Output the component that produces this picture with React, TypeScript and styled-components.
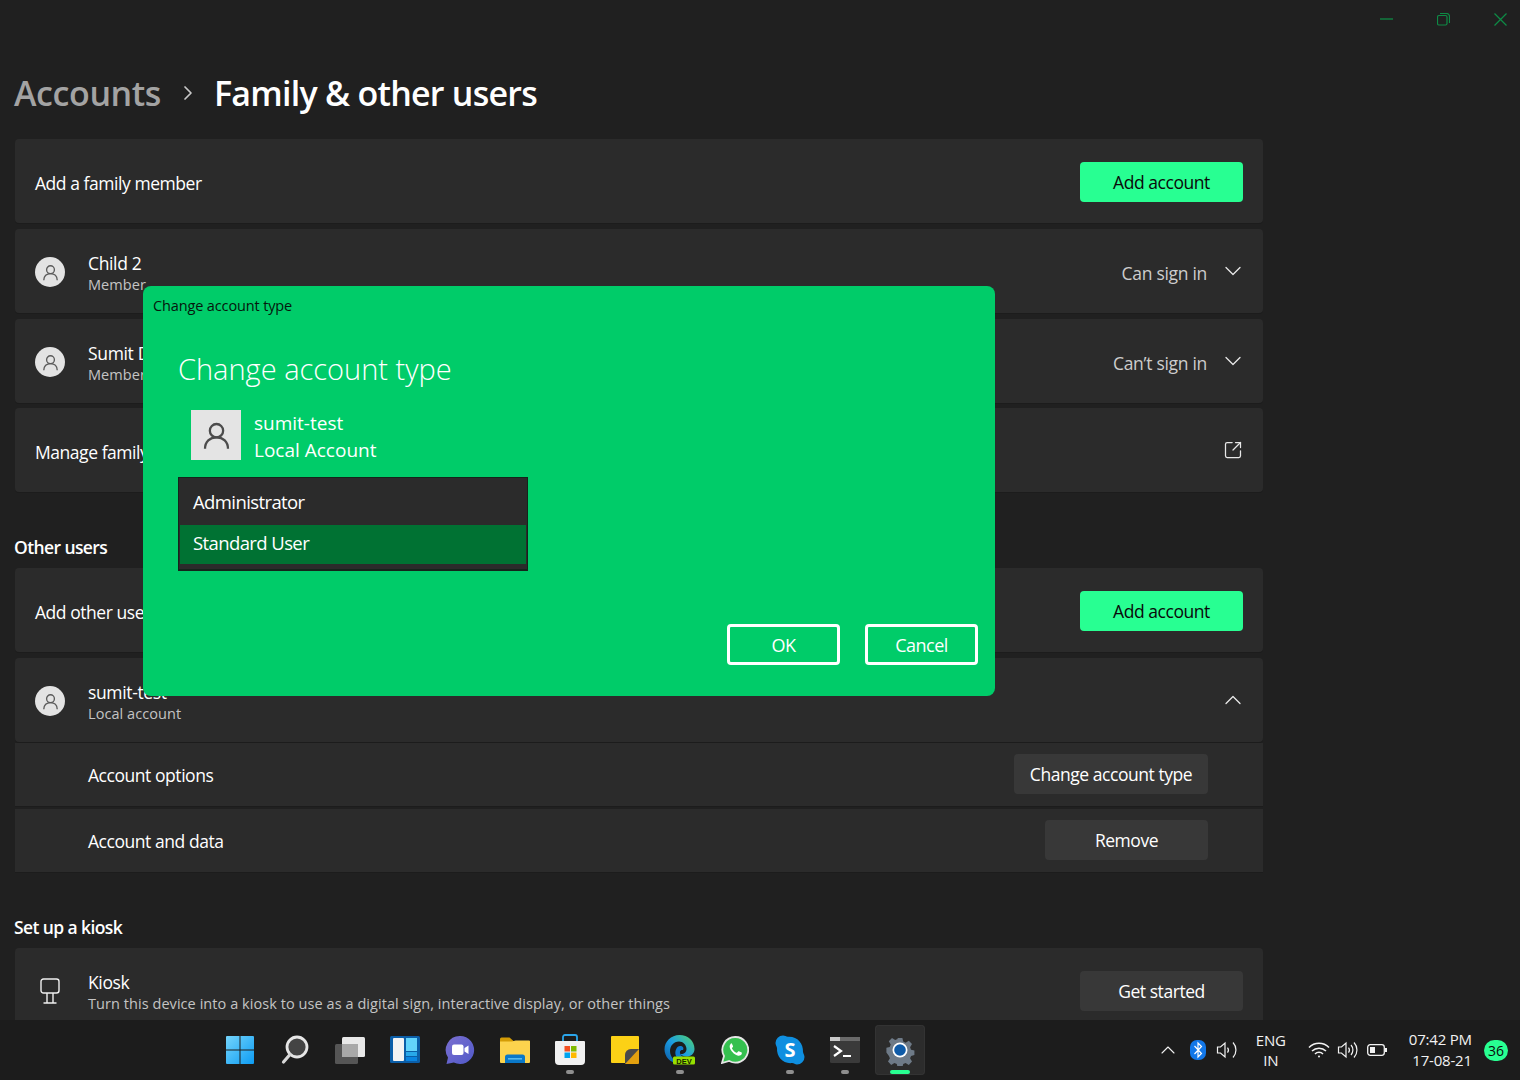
import { createGlobalStyle, styled } from "styled-components";
import type { ReactNode } from "react";
import { ChevronDown, ChevronRight, ChevronUp, SquareArrowOutUpRight } from "lucide-react";

const GlobalStyle = createGlobalStyle`
  html, body {
    margin: 0;
    padding: 0;
    background: #202020;
    overflow: hidden;
  }
  * {
    box-sizing: border-box;
  }
  body {
    font-family: "Open Sans", "Noto Sans", "Liberation Sans", sans-serif;
    color: #fff;
  }
`;

const Screen = styled.div`
  position: relative;
  width: 1520px;
  height: 1080px;
  overflow: hidden;
  background: #202020;
  display: flex;
  flex-direction: column;
`;

const Content = styled.main`
  height: 1020px;
  flex-shrink: 0;
  overflow: hidden;
  padding: 0 257px 0 15px;
`;

const WindowControls = styled.div`
  height: 38px;
  margin-right: -257px;
  display: flex;
  justify-content: flex-end;
  align-items: center;
  color: #0e8a45;
`;

const WindowButton = styled.span`
  width: 57px;
  display: flex;
  justify-content: center;
  &:last-child {
    width: 40px;
    margin-left: 8px;
  }
`;

const Breadcrumb = styled.h1`
  margin: 27px 0 0 -1px;
  height: 74px;
  display: flex;
  align-items: flex-start;
  font-size: 34px;
  line-height: 56px;
  font-weight: 600;
  letter-spacing: -0.75px;
  color: #fff;
`;

const Crumb = styled.span`
  color: #a3a3a3;
  letter-spacing: -0.4px;
`;

const CrumbArrow = styled.span`
  width: 53px;
  height: 56px;
  display: flex;
  align-items: center;
  justify-content: center;
  color: #c8c8c8;
`;

const Label = styled.span`
  flex: 1;
  margin-top: 4px;
  font-size: 17.5px;
  letter-spacing: -0.45px;
  color: #fff;
`;

const Button = styled.button<{ $accent?: boolean; $w: number; $mr?: number }>`
  width: ${({ $w }) => $w}px;
  height: 40px;
  margin-right: ${({ $mr = 0 }) => $mr}px;
  margin-top: 2px;
  border: none;
  border-radius: 4px;
  font-family: inherit;
  font-size: 17.5px;
  letter-spacing: -0.45px;
  color: ${({ $accent }) => ($accent ? "#0a0a0a" : "#fff")};
  background: ${({ $accent }) => ($accent ? "#28ff92" : "#383838")};
`;

const Card = styled.section<{ $mb?: number }>`
  height: 84px;
  margin-bottom: ${({ $mb = 6 }) => $mb}px;
  padding: 0 20px;
  display: flex;
  align-items: center;
  background: #2b2b2b;
  border-radius: 4px;
  box-shadow: 0 1px 0 #1c1c1c;
`;

const DetailRow = styled(Card)<{ $h: number }>`
  height: ${({ $h }) => $h}px;
  border-radius: 0;
  padding-left: 73px;
  padding-right: 55px;
  ${Label} {
    margin-top: 0;
  }
  ${Button} {
    margin-top: -1px;
  }
`;

const Avatar = styled.span`
  width: 30px;
  height: 30px;
  margin: 2px 23px 0 0;
  border-radius: 50%;
  background: #e3e3e3;
  display: flex;
  align-items: center;
  justify-content: center;
  flex-shrink: 0;
`;

const KioskIcon = styled.span`
  width: 30px;
  margin: 2px 23px 0 0;
  display: flex;
  justify-content: center;
`;

const Texts = styled.div`
  flex: 1;
  display: flex;
  flex-direction: column;
  margin-top: 3px;
`;

const Name = styled.span`
  font-size: 17.5px;
  line-height: 23px;
  letter-spacing: -0.35px;
`;

const Sub = styled.span`
  font-size: 14.5px;
  line-height: 19px;
  letter-spacing: 0.06px;
  color: #c4c4c4;
`;

const Status = styled.span`
  margin: 4px 18px 0 0;
  font-size: 17.5px;
  letter-spacing: -0.3px;
  color: #cdcdcd;
`;

const ChevronSlot = styled.span`
  width: 16px;
  margin: -1px 2px 0 0;
  display: flex;
  justify-content: center;
  color: #e8e8e8;
  svg {
    flex-shrink: 0;
  }
`;

const SectionTitle = styled.h2<{ $h: number }>`
  margin: 0 0 0 -1px;
  height: ${({ $h }) => $h}px;
  display: flex;
  align-items: flex-end;
  padding-bottom: 9px;
  font-size: 17.5px;
  font-weight: 600;
  letter-spacing: -0.6px;
  line-height: 24px;
`;

const Dialog = styled.div`
  position: absolute;
  left: 143px;
  top: 286px;
  width: 852px;
  height: 410px;
  background: #00cc69;
  border-radius: 8px;
  display: flex;
  flex-direction: column;
`;

const DialogBar = styled.div`
  height: 39px;
  padding-left: 10px;
  display: flex;
  align-items: center;
  font-size: 14.5px;
  letter-spacing: -0.13px;
  color: #06170d;
`;

const DialogBody = styled.div`
  flex: 1;
  padding: 0 17px 31px 35px;
  display: flex;
  flex-direction: column;
`;

const DialogTitle = styled.h3`
  margin: 22px 0 0;
  height: 63px;
  font-size: 29px;
  line-height: 44px;
  font-weight: 300;
  letter-spacing: 0;
`;

const AccountRow = styled.div`
  margin-left: 13px;
  height: 50px;
  display: flex;
  gap: 13px;
  align-items: center;
`;

const AccountPicture = styled.span`
  width: 50px;
  height: 50px;
  background: #e4e4e4;
  display: flex;
  align-items: center;
  justify-content: center;
`;

const AccountText = styled.div`
  margin-top: 4px;
  font-size: 19px;
  line-height: 27px;
  letter-spacing: 0;
`;

const RoleList = styled.ul`
  width: 350px;
  height: 94px;
  margin: 17px 0 0;
  padding: 0 1px;
  list-style: none;
  background: #2b2b2b;
  border: 1px solid #14251b;
  border-width: 1px 1px 2px;
`;

const Role = styled.li<{ $selected?: boolean }>`
  height: ${({ $selected }) => ($selected ? 39 : 47)}px;
  padding: ${({ $selected }) => ($selected ? "0 0 5px 13px" : "0 0 0 13px")};
  display: flex;
  align-items: center;
  font-size: 18.5px;
  letter-spacing: -0.6px;
  background: ${({ $selected }) => ($selected ? "#007233" : "transparent")};
`;

const DialogActions = styled.div`
  margin-top: auto;
  display: flex;
  justify-content: flex-end;
  gap: 25px;
`;

const OutlineButton = styled.button`
  width: 113px;
  height: 41px;
  border: 3px solid #fff;
  border-radius: 4px;
  background: transparent;
  color: #fff;
  font-family: inherit;
  font-size: 18px;
  letter-spacing: -0.5px;
`;

const Taskbar = styled.footer`
  height: 60px;
  flex-shrink: 0;
  display: flex;
  align-items: center;
  padding-left: 215px;
  background: #1c1c1c;
`;

const TaskIcons = styled.div`
  display: flex;
  gap: 5px;
`;

const TaskSlot = styled.span<{ $active?: boolean }>`
  position: relative;
  width: 50px;
  height: 50px;
  display: flex;
  align-items: center;
  justify-content: center;
  border-radius: 4px;
  background: ${({ $active }) => ($active ? "#2c2c2c" : "transparent")};
  box-shadow: ${({ $active }) => ($active ? "inset 0 0 0 1px #333" : "none")};
`;

const RunDot = styled.i<{ $active?: boolean }>`
  position: absolute;
  left: 50%;
  bottom: 1px;
  width: ${({ $active }) => ($active ? 20 : 8)}px;
  height: 4px;
  transform: translateX(-50%);
  border-radius: 2px;
  background: ${({ $active }) => ($active ? "#28ff92" : "#8e8e8e")};
`;

const Tray = styled.div`
  margin-left: auto;
  width: 367px;
  display: flex;
  align-items: center;
  color: #f2f2f2;
  font-size: 15px;
  letter-spacing: -0.2px;
`;

const TrayIcon = styled.span<{ $w: number }>`
  width: ${({ $w }) => $w}px;
  display: flex;
  justify-content: center;
`;

const Lang = styled.div`
  width: 60px;
  margin-right: 5px;
  text-align: center;
  line-height: 20px;
`;

const Clock = styled.div`
  width: 83px;
  text-align: right;
  line-height: 21px;
`;

const Badge = styled.span`
  width: 25px;
  height: 21px;
  margin: 0 12px;
  border-radius: 11px;
  background: #28ff92;
  color: #0a0a0a;
  font-size: 14px;
  display: flex;
  align-items: center;
  justify-content: center;
`;

const UserGlyph = ({ size, color }: { size: number; color: string }) => (
  <svg width={size} height={size} viewBox="0 0 24 24" fill="none" stroke={color} strokeWidth="1.9">
    <circle cx="12" cy="8" r="5.5" />
    <path d="M2.5 23c0-6 4-9.5 9.5-9.5s9.5 3.5 9.5 9.5" />
  </svg>
);

const StartIcon = () => (
  <svg width="30" height="30" viewBox="0 0 30 30">
    <defs>
      <linearGradient id="win" x1="0" y1="0" x2="1" y2="1">
        <stop offset="0" stopColor="#74d4fb" />
        <stop offset="1" stopColor="#0d9cf3" />
      </linearGradient>
    </defs>
    <path d="M1 2a1 1 0 0 1 1-1h12.5v13.5H1zM15.5 1H28a1 1 0 0 1 1 1v12.5H15.5zM1 15.5h13.5V29H2a1 1 0 0 1-1-1zM15.5 15.5H29V28a1 1 0 0 1-1 1H15.5z" fill="url(#win)" />
  </svg>
);

const SearchIcon = () => (
  <svg width="30" height="30" viewBox="0 0 30 30">
    <circle cx="17" cy="12" r="10" fill="#444" stroke="#e6e6e6" strokeWidth="2.8" />
    <path d="M10 19.5 3.5 27" stroke="#d8d8d8" strokeWidth="3.2" strokeLinecap="round" />
  </svg>
);

const TaskViewIcon = () => (
  <svg width="32" height="28" viewBox="0 0 32 28">
    <rect x="8" y="1" width="23" height="20" rx="1.5" fill="#e8e8e8" />
    <rect x="1" y="8" width="23" height="20" rx="1.5" fill="#5a5a5a" fillOpacity=".92" />
    <rect x="8" y="8" width="16" height="13" fill="#a8a8a8" />
  </svg>
);

const WidgetsIcon = () => (
  <svg width="30" height="28" viewBox="0 0 30 28">
    <rect width="30" height="27" rx="1.5" fill="#0b5ea8" />
    <rect x="3" y="2" width="11" height="23" rx="1" fill="#f3f3f3" />
    <rect x="16" y="2" width="11" height="13" fill="#63d4fb" />
    <rect x="16" y="16" width="11" height="4" fill="#28a8ea" />
    <rect x="16" y="21" width="11" height="4" fill="#0a84e0" />
  </svg>
);

const ChatIcon = () => (
  <svg width="30" height="30" viewBox="0 0 30 30">
    <defs>
      <linearGradient id="chat" x1="0" y1="0" x2="1" y2="1">
        <stop offset="0" stopColor="#7b6fd0" />
        <stop offset="1" stopColor="#5059c9" />
      </linearGradient>
    </defs>
    <path d="M15 1a14 14 0 1 1-6.2 26.5L1.5 29 3 22.6A14 14 0 0 1 15 1z" fill="url(#chat)" />
    <rect x="7" y="9.5" width="11.5" height="10.5" rx="2" fill="#fff" />
    <path d="m19.5 13 4-2.6v8.6l-4-2.6z" fill="#fff" />
  </svg>
);

const FolderIcon = () => (
  <svg width="30" height="27" viewBox="0 0 30 27">
    <path d="M0 2a1.5 1.5 0 0 1 1.5-1.5h8l4 3.5H30v6H0z" fill="#d49c06" />
    <path d="M0 4.5h12l3.5-1H29a1 1 0 0 1 1 1V25a1 1 0 0 1-1 1H1a1 1 0 0 1-1-1z" fill="#fcd34d" />
    <path d="M5 26v-6a2.5 2.5 0 0 1 2.5-2.5h15A2.5 2.5 0 0 1 25 20v6z" fill="#0a78c8" />
    <rect x="8" y="21" width="14" height="1.6" fill="#55b8ee" />
  </svg>
);

const StoreIcon = () => (
  <svg width="30" height="32" viewBox="0 0 30 32">
    <path d="M8 8V3a2 2 0 0 1 2-2h10a2 2 0 0 1 2 2v5" fill="none" stroke="#2aa5ea" strokeWidth="1.8" />
    <path d="M1 7h28a1 1 0 0 1 1 1v19a4 4 0 0 1-4 4H4a4 4 0 0 1-4-4V8a1 1 0 0 1 1-1z" fill="#f1f1f1" />
    <rect x="9.5" y="12" width="5.5" height="5.5" fill="#f25022" />
    <rect x="16" y="12" width="5.5" height="5.5" fill="#7fba00" />
    <rect x="9.5" y="18.5" width="5.5" height="5.5" fill="#00a4ef" />
    <rect x="16" y="18.5" width="5.5" height="5.5" fill="#ffb900" />
  </svg>
);

const NotesIcon = () => (
  <svg width="28" height="28" viewBox="0 0 28 28">
    <path d="M1 0h26a1 1 0 0 1 1 1v14L15 27H1a1 1 0 0 1-1-1V1a1 1 0 0 1 1-1z" fill="#fcd116" />
    <path d="M28 13v14a1 1 0 0 1-1 1H14v-9a6 6 0 0 1 6-6z" fill="#e3a00f" />
    <path d="M14 28v-9a6 6 0 0 1 6-6h8z" fill="#4a4a4a" />
  </svg>
);

const EdgeDevIcon = () => (
  <svg width="32" height="32" viewBox="0 0 32 32">
    <defs>
      <linearGradient id="edge" x1="0" y1="1" x2="1" y2="0">
        <stop offset="0" stopColor="#0c59a4" />
        <stop offset=".5" stopColor="#1b9de2" />
        <stop offset="1" stopColor="#54d66a" />
      </linearGradient>
    </defs>
    <path d="M15.5 1C24 1 30.5 7 30.5 15c0 5-4 7.5-8 7.5-3 0-5-1-6-2.5 3 .5 6-1.5 6-5C22.5 11 19 7.5 15 7.5 9.5 7.5 6 12 6 17c0 6 5 11 10 12C7 30 .5 23 .5 15.5.5 7.5 7 1 15.5 1z" fill="url(#edge)" />
    <path d="M12 22c-2-5 1-10 4-10 3 0 4 2 3 4-3-.5-4 2-2 5s5 3.5 8 2c-3.5 5-10.5 4-13-1z" fill="#0f7bcf" />
    <rect x="9" y="22.5" width="22" height="8" rx="1.5" fill="#98e000" />
    <text x="20" y="29.5" textAnchor="middle" fontSize="7.5" fontWeight="700" fill="#152200" fontFamily="Liberation Sans, sans-serif">DEV</text>
  </svg>
);

const WhatsAppIcon = () => (
  <svg width="28" height="28" viewBox="0 0 28 28">
    <path d="M14.5 1a12.8 12.8 0 1 1-6.3 24L1 27l2-7A12.8 12.8 0 0 1 14.5 1z" fill="#35c04f" stroke="#e6e6e6" strokeWidth="1.8" />
    <path d="M10.5 7.5c-1.2.5-2.2 2-1.7 4 .8 3.3 4.3 7 7.7 8 2 .6 3.7-.3 4.2-1.5.3-.8.2-1.2 0-1.4l-2.8-1.4c-.4-.1-.6 0-.8.3l-.9 1.1c-.2.2-.5.3-.8.1-2-1-3.4-2.3-4.4-4.2-.1-.3 0-.5.2-.7l.7-.9c.2-.3.2-.5.1-.8l-1.2-2.5c-.2-.3-.8-.3-1.3-.1z" fill="#fff" />
  </svg>
);

const SkypeIcon = () => (
  <svg width="30" height="30" viewBox="0 0 30 30">
    <path d="M8 .5c2 0 3 1 5 1.2C22 1 28.5 8 28 17c.3 2 1.5 3 1.5 5a7.5 7.5 0 0 1-7.5 7.5c-2 0-3-1.2-5-1.4C8 29 1.5 22 2 13 1.7 11 .5 10 .5 8A7.5 7.5 0 0 1 8 .5z" fill="#0f8fe0" />
    <text x="15" y="22" textAnchor="middle" fontSize="20" fontWeight="700" fill="#fff" fontFamily="Open Sans, sans-serif">S</text>
  </svg>
);

const TerminalIcon = () => (
  <svg width="30" height="26" viewBox="0 0 30 26">
    <rect width="30" height="26" rx="1.5" fill="#3a3a3a" />
    <rect width="10" height="4" fill="#c9c9c9" />
    <rect x="10" width="20" height="4" fill="#6a6a6a" />
    <path d="m4 9 7 5-7 5" fill="none" stroke="#fff" strokeWidth="2.2" />
    <path d="M13 19h8" stroke="#fff" strokeWidth="2" />
  </svg>
);

const SettingsIcon = () => (
  <svg width="32" height="32" viewBox="0 0 32 32">
    <path d="M13 1h6l1 4.5 3 1.3 4-2.4 4 4.2-2.4 4 1.200 3 4.200 1v5.800l-4.200 1-1.200 3 2.400 4-4 4.200-4-2.400-3 1.300-1 4.400h-6l-1-4.400-3-1.300-4 2.400-4-4.200 2.400-4-1.200-3L-1 19v-5.800l4.200-1 1.200-3-2.400-4 4-4.200 4 2.400 3-1.300z" fill="#6e7a87" transform="translate(3.2 3.2) scale(.8)" />
    <circle cx="16" cy="16" r="7.5" fill="#fff" />
    <circle cx="16" cy="16" r="5.8" fill="#0f5ba8" />
  </svg>
);

const Speaker = ({ waves }: { waves: number }) => (
  <svg width="22" height="18" viewBox="0 0 22 18" fill="none" stroke="currentColor" strokeWidth="1.2">
    <path d="M1.5 6h3L9 2v14l-4.5-4h-3z" />
    <path d="M11.5 6.5a4 4 0 0 1 0 5" />
    {waves > 1 && <path d="M14 4a7.5 7.5 0 0 1 0 10" />}
    <path d="M17 1.5a11 11 0 0 1 0 15" />
  </svg>
);

const tasks: { icon: ReactNode; dot?: boolean; active?: boolean }[] = [
  { icon: <StartIcon /> },
  { icon: <SearchIcon /> },
  { icon: <TaskViewIcon /> },
  { icon: <WidgetsIcon /> },
  { icon: <ChatIcon /> },
  { icon: <FolderIcon /> },
  { icon: <StoreIcon />, dot: true },
  { icon: <NotesIcon /> },
  { icon: <EdgeDevIcon />, dot: true },
  { icon: <WhatsAppIcon /> },
  { icon: <SkypeIcon />, dot: true },
  { icon: <TerminalIcon />, dot: true },
  { icon: <SettingsIcon />, dot: true, active: true },
];

const MemberCard = ({ name, sub, status }: { name: string; sub: string; status?: string }) => (
  <>
    <Avatar>
      <UserGlyph size={17} color="#5a5a5a" />
    </Avatar>
    <Texts>
      <Name>{name}</Name>
      <Sub>{sub}</Sub>
    </Texts>
    {status && <Status>{status}</Status>}
  </>
);

export default function App() {
  return (
    <Screen>
      <GlobalStyle />
      <Content>
        <WindowControls>
          <WindowButton>
            <svg width="13" height="2"><path d="M0 1h13" stroke="currentColor" strokeWidth="1.3" /></svg>
          </WindowButton>
          <WindowButton>
            <svg width="13" height="13" viewBox="0 0 13 13" fill="none" stroke="currentColor" strokeWidth="1.2">
              <rect x=".5" y="2.5" width="9.5" height="9.5" rx="1.5" />
              <path d="M3 .5h6.5a3 3 0 0 1 3 3V10" />
            </svg>
          </WindowButton>
          <WindowButton>
            <svg width="13" height="13" viewBox="0 0 13 13" stroke="currentColor" strokeWidth="1.3"><path d="m.5.5 12 12M12.5.5l-12 12" /></svg>
          </WindowButton>
        </WindowControls>

        <Breadcrumb>
          <Crumb>Accounts</Crumb>
          <CrumbArrow>
            <ChevronRight size={24} strokeWidth={1.7} />
          </CrumbArrow>
          Family &amp; other users
        </Breadcrumb>

        <Card>
          <Label>Add a family member</Label>
          <Button $accent $w={163}>Add account</Button>
        </Card>
        <Card>
          <MemberCard name="Child 2" sub="Member" status="Can sign in" />
          <ChevronSlot><ChevronDown size={28} strokeWidth={1.1} /></ChevronSlot>
        </Card>
        <Card $mb={5}>
          <MemberCard name="Sumit D" sub="Member" status="Can’t sign in" />
          <ChevronSlot><ChevronDown size={28} strokeWidth={1.1} /></ChevronSlot>
        </Card>
        <Card $mb={0}>
          <Label>Manage family</Label>
          <ChevronSlot><SquareArrowOutUpRight size={20} strokeWidth={1.5} /></ChevronSlot>
        </Card>

        <SectionTitle $h={76}>Other users</SectionTitle>
        <Card>
          <Label>Add other user</Label>
          <Button $accent $w={163}>Add account</Button>
        </Card>
        <Card $mb={1}>
          <MemberCard name="sumit-test" sub="Local account" />
          <ChevronSlot><ChevronUp size={28} strokeWidth={1.1} /></ChevronSlot>
        </Card>
        <DetailRow $h={63} $mb={3}>
          <Label>Account options</Label>
          <Button $w={194}>Change account type</Button>
        </DetailRow>
        <DetailRow $h={63} $mb={0}>
          <Label>Account and data</Label>
          <Button $w={163}>Remove</Button>
        </DetailRow>

        <SectionTitle $h={76}>Set up a kiosk</SectionTitle>
        <Card>
          <KioskIcon>
            <svg width="20" height="26" viewBox="0 0 20 26" fill="none" stroke="#f0f0f0" strokeWidth="1.4">
              <rect x="1" y="1" width="18" height="14" rx="2.5" />
              <path d="M7 15v10M13 15v10M3.5 25h13" />
            </svg>
          </KioskIcon>
          <Texts>
            <Name>Kiosk</Name>
            <Sub>Turn this device into a kiosk to use as a digital sign, interactive display, or other things</Sub>
          </Texts>
          <Button $w={163}>Get started</Button>
        </Card>
      </Content>

      <Dialog>
        <DialogBar>Change account type</DialogBar>
        <DialogBody>
          <DialogTitle>Change account type</DialogTitle>
          <AccountRow>
            <AccountPicture>
              <UserGlyph size={29} color="#4c4c4c" />
            </AccountPicture>
            <AccountText>
              sumit-test
              <br />
              Local Account
            </AccountText>
          </AccountRow>
          <RoleList>
            <Role>Administrator</Role>
            <Role $selected>Standard User</Role>
          </RoleList>
          <DialogActions>
            <OutlineButton>OK</OutlineButton>
            <OutlineButton>Cancel</OutlineButton>
          </DialogActions>
        </DialogBody>
      </Dialog>

      <Taskbar>
        <TaskIcons>
          {tasks.map((t, i) => (
            <TaskSlot key={i} $active={t.active}>
              {t.icon}
              {t.dot && <RunDot $active={t.active} />}
            </TaskSlot>
          ))}
        </TaskIcons>
        <Tray>
          <TrayIcon $w={31}>
            <ChevronUp size={24} strokeWidth={1.1} />
          </TrayIcon>
          <TrayIcon $w={31}>
            <svg width="16" height="20" viewBox="0 0 16 20">
              <rect width="16" height="20" rx="7" fill="#1277e8" />
              <path d="m4.5 6 7 7.5L8 17V3l3.5 3.5-7 7.5" fill="none" stroke="#fff" strokeWidth="1.2" />
            </svg>
          </TrayIcon>
          <TrayIcon $w={30}><Speaker waves={1} /></TrayIcon>
          <Lang>
            ENG
            <br />
            IN
          </Lang>
          <TrayIcon $w={30}>
            <svg width="22" height="16" viewBox="0 0 22 16" fill="none" stroke="currentColor" strokeWidth="1.5">
              <path d="M1 5.5a14 14 0 0 1 20 0M4 9a10 10 0 0 1 14 0M7 12a5.5 5.5 0 0 1 8 0" />
              <circle cx="11" cy="14.5" r="1" fill="currentColor" stroke="none" />
            </svg>
          </TrayIcon>
          <TrayIcon $w={30}><Speaker waves={2} /></TrayIcon>
          <TrayIcon $w={30}>
            <svg width="20" height="12" viewBox="0 0 20 12" fill="none">
              <rect x=".7" y=".7" width="16.6" height="10.6" rx="2.5" stroke="currentColor" strokeWidth="1.3" />
              <rect x="3" y="3" width="5" height="6" fill="currentColor" />
              <rect x="18" y="4" width="2" height="4" fill="currentColor" />
            </svg>
          </TrayIcon>
          <Clock>
            07:42 PM
            <br />
            17-08-21
          </Clock>
          <Badge>36</Badge>
        </Tray>
      </Taskbar>
    </Screen>
  );
}
